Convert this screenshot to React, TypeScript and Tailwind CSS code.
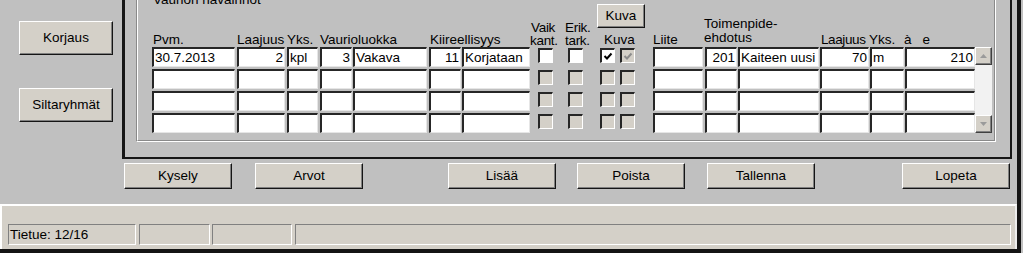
import React from 'react';

const FONT = "font-['Liberation_Sans',Arial,sans-serif]";

type Cell =
  | { kind: 'field'; text?: string; right?: boolean }
  | { kind: 'check'; checked?: boolean; disabled?: boolean };

// column widths and the gap before each one, in order
const COLS = [
  { w: 'w-[83px]', ml: 'ml-0' },
  { w: 'w-[48px]', ml: 'ml-[2px]' },
  { w: 'w-[31px]', ml: 'ml-[2px]' },
  { w: 'w-[32px]', ml: 'ml-[2px]' },
  { w: 'w-[74px]', ml: 'ml-[1px]' },
  { w: 'w-[32px]', ml: 'ml-[2px]' },
  { w: 'w-[68px]', ml: 'ml-[1px]' },
  { w: 'w-[15px]', ml: 'ml-[8px]' },
  { w: 'w-[15px]', ml: 'ml-[15px]' },
  { w: 'w-[15px]', ml: 'ml-[17px]' },
  { w: 'w-[15px]', ml: 'ml-[5px]' },
  { w: 'w-[50px]', ml: 'ml-[18px]' },
  { w: 'w-[32px]', ml: 'ml-[2px]' },
  { w: 'w-[81px]', ml: 'ml-[1px]' },
  { w: 'w-[49px]', ml: 'ml-[1px]' },
  { w: 'w-[34px]', ml: 'ml-[1px]' },
  { w: 'w-[70px]', ml: 'ml-[1px]' },
];

const firstRow: Cell[] = [
  { kind: 'field', text: '30.7.2013' },
  { kind: 'field', text: '2', right: true },
  { kind: 'field', text: 'kpl' },
  { kind: 'field', text: '3', right: true },
  { kind: 'field', text: 'Vakava' },
  { kind: 'field', text: '11', right: true },
  { kind: 'field', text: 'Korjataan' },
  { kind: 'check' },
  { kind: 'check' },
  { kind: 'check', checked: true },
  { kind: 'check', checked: true, disabled: true },
  { kind: 'field' },
  { kind: 'field', text: '201', right: true },
  { kind: 'field', text: 'Kaiteen uusi' },
  { kind: 'field', text: '70', right: true },
  { kind: 'field', text: 'm' },
  { kind: 'field', text: '210', right: true },
];

const emptyRow: Cell[] = firstRow.map((c) =>
  c.kind === 'check' ? { kind: 'check', disabled: true } : { kind: 'field' }
);

const rows = [firstRow, emptyRow, emptyRow, emptyRow];

function Btn({ label, className }: { label: string; className: string }) {
  return (
    <button
      className={`${className} bg-[#d4d0c8] border border-t-white border-l-white border-r-[#151515] border-b-[#151515] shadow-[inset_-1px_-1px_0_#808080] text-[13.5px] text-black leading-none flex items-center justify-center`}
    >
      {label}
    </button>
  );
}

function CheckBox({ checked, disabled }: { checked?: boolean; disabled?: boolean }) {
  return (
    <div
      className={`w-[15px] h-[15px] mt-[1px] border-t-2 border-l-2 border-t-[#262626] border-l-[#262626] border-b border-r border-b-white border-r-white flex items-center justify-center ${
        disabled ? 'bg-[#d4d0c8]' : 'bg-white'
      }`}
    >
      {checked && (
        <svg width="10" height="9" viewBox="0 0 10 9">
          <polyline
            points="1.5,4 4,6.5 8.5,1.5"
            fill="none"
            stroke={disabled ? '#8c8c8c' : '#000'}
            strokeWidth="2"
          />
        </svg>
      )}
    </div>
  );
}

function Field({ text, right }: { text?: string; right?: boolean }) {
  return (
    <div
      className={`w-full h-[20px] bg-white border-t-2 border-l-2 border-t-[#262626] border-l-[#262626] border-b border-r border-b-[#e6e6e6] border-r-[#e6e6e6] px-[1px] text-[13.5px] leading-[17px] text-black whitespace-nowrap overflow-hidden ${
        right ? 'text-right' : ''
      }`}
    >
      {text}
    </div>
  );
}

function Arrow({ up }: { up?: boolean }) {
  return (
    <div className="h-[18px] bg-[#d4d0c8] border border-t-white border-l-white border-r-[#404040] border-b-[#404040] shadow-[inset_-1px_-1px_0_#808080] flex items-center justify-center">
      <svg width="7" height="4" viewBox="0 0 7 4">
        <polygon points={up ? '3.5,0 7,4 0,4' : '0,0 7,0 3.5,4'} fill="#9a9a9a" />
      </svg>
    </div>
  );
}

function Header() {
  return (
    <div className="flex items-end h-[40px] text-[13.5px] leading-[14px] text-black whitespace-nowrap">
      <div className="w-[85px] pl-[1px]">Pvm.</div>
      <div className="w-[50px]">Laajuus</div>
      <div className="w-[33px]">Yks.</div>
      <div className="w-[109px]">Vaurioluokka</div>
      <div className="w-[101px] pl-[1px]">Kiireellisyys</div>
      <div className="w-[34px] leading-[13px] tracking-[-0.3px]">
        <div className="pl-[1px]">Vaik</div>
        <div>kant.</div>
      </div>
      <div className="w-[33px] leading-[13px] tracking-[-0.3px] pl-[1px]">
        <div>Erik.</div>
        <div>tark.</div>
      </div>
      <div className="w-[56px] flex flex-col">
        <Btn label="Kuva" className="w-[48px] h-[24px]" />
        <div className="mt-[5px] pl-[7px]">Kuva</div>
      </div>
      <div className="w-[52px]">Liite</div>
      <div className="w-[115px] -ml-[1px] pr-[1px] mb-[2px]">
        <div>Toimenpide-</div>
        <div>ehdotus</div>
      </div>
      <div className="w-[50px] pl-[2px] tracking-[-0.4px]">Laajuus</div>
      <div className="w-[35px]">Yks.</div>
      <div className="w-[70px]">
        <span>à</span>
        <span className="ml-[11px]">e</span>
      </div>
    </div>
  );
}

export default function App() {
  return (
    <div className={`w-[1023px] h-[253px] bg-[#c0c0c0] overflow-hidden ${FONT}`}>
      <div className="w-[1021px] h-[253px] border-r-4 border-b-4 border-[#141414] flex flex-col">
        {/* upper form */}
        <div className="h-[204px] flex">
          <div className="w-[122px] pl-[19px] pt-[21px] flex flex-col gap-[33px]">
            <Btn label="Korjaus" className="w-[94px] h-[34px]" />
            <Btn label="Siltaryhmät" className="w-[94px] h-[34px]" />
          </div>

          <div className="flex flex-col">
            <div className="w-[890px] h-[159px] border-l-[3px] border-r-2 border-b-2 border-[#161616] overflow-hidden">
              {/* Vaurion havainnot group */}
              <div className="ml-[11px] -mt-[10px] w-[860px] h-[152px] border border-t-[#8a8a8a] border-l-[#8a8a8a] border-b-white border-r-white">
                <div className="h-full border border-t-white border-l-white border-b-[#8a8a8a] border-r-[#8a8a8a] pl-[14px]">
                  <div className="h-[14px] text-[13.5px] leading-[14px] text-black pl-[1px] mt-[1px]">
                    Vaurion havainnot
                  </div>
                  <Header />
                  <div className="flex">
                    <div className="flex flex-col gap-[2px]">
                      {rows.map((row, r) => (
                        <div key={r} className="flex h-[20px]">
                          {row.map((cell, i) => (
                            <div key={i} className={`${COLS[i].w} ${COLS[i].ml}`}>
                              {cell.kind === 'field' ? (
                                <Field text={cell.text} right={cell.right} />
                              ) : (
                                <CheckBox checked={cell.checked} disabled={cell.disabled} />
                              )}
                            </div>
                          ))}
                        </div>
                      ))}
                    </div>
                    {/* scrollbar */}
                    <div className="w-[17px] h-[86px] bg-[#f2f2f2] flex flex-col justify-between">
                      <Arrow up />
                      <Arrow />
                    </div>
                  </div>
                </div>
              </div>
            </div>

            <div className="flex mt-[4px] h-[26px]">
              <Btn label="Kysely" className="w-[108px] h-[26px] ml-[2px]" />
              <Btn label="Arvot" className="w-[108px] h-[26px] ml-[23px]" />
              <Btn label="Lisää" className="w-[108px] h-[26px] ml-[85px]" />
              <Btn label="Poista" className="w-[108px] h-[26px] ml-[21px]" />
              <Btn label="Tallenna" className="w-[108px] h-[26px] ml-[22px]" />
              <Btn label="Lopeta" className="w-[108px] h-[26px] ml-[87px]" />
            </div>
          </div>
        </div>

        {/* status bar */}
        <div className="h-[45px] bg-[#d4d0c8] border-t-2 border-l-2 border-r-2 border-t-white border-l-white border-r-[#ececec] pt-[18px] pl-[6px] flex">
          <div className="w-[128px] h-[21px] border border-t-[#808080] border-l-[#808080] border-b-white border-r-white text-[13.5px] leading-[19px] text-black pl-[1px]">
            Tietue: 12/16
          </div>
          <div className="w-[71px] h-[21px] ml-[3px] border border-t-[#808080] border-l-[#808080] border-b-white border-r-white" />
          <div className="w-[80px] h-[21px] ml-[2px] border border-t-[#808080] border-l-[#808080] border-b-white border-r-white" />
          <div className="w-[716px] h-[21px] ml-[3px] border border-t-[#808080] border-l-[#808080] border-b-white border-r-white" />
        </div>
      </div>
    </div>
  );
}
